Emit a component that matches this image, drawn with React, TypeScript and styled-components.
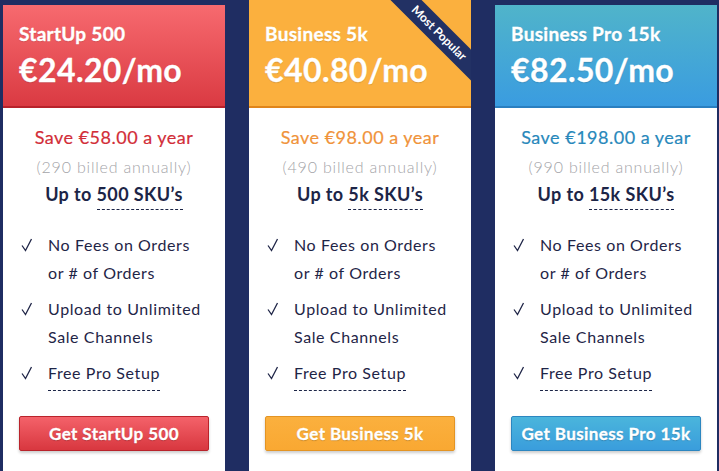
import * as React from 'react'
import styled, { createGlobalStyle } from 'styled-components'

const GlobalStyle = createGlobalStyle`
  html, body {
    margin: 0;
    padding: 0;
    background: #1f2d62;
    overflow: hidden;
  }
  body {
    font-family: Lato, "Open Sans", sans-serif;
  }
`

type Tone = 'red' | 'orange' | 'blue'

const tones = {
  red: {
    top: '#f76a6f',
    bottom: '#da3a42',
    edge: '#b8222b',
    save: '#d22d38',
    btnTop: '#f4626a',
    btnBottom: '#d8373f',
    btnEdge: '#b9232b',
  },
  orange: {
    top: '#fbb03e',
    bottom: '#fbb03e',
    edge: '#e0851a',
    save: '#f0933a',
    btnTop: '#fbb03e',
    btnBottom: '#f9a832',
    btnEdge: '#e39424',
  },
  blue: {
    top: '#50b4ca',
    bottom: '#3a9ce0',
    edge: '#2a7fc0',
    save: '#2888bb',
    btnTop: '#4ab5dc',
    btnBottom: '#3a9ddc',
    btnEdge: '#2c86c0',
  },
}

const Row = styled.div`
  display: flex;
  gap: 24px;
  padding: 0 2px 0 3px;
  align-items: flex-start;
  height: 471px;
  overflow: hidden;
`

const Card = styled.div<{ $featured?: boolean }>`
  width: 222px;
  flex: none;
  margin-top: ${(p) => (p.$featured ? '0' : '5px')};
  background: #fff;
  height: 520px;
`

const Header = styled.div<{ $tone: Tone; $featured?: boolean }>`
  position: relative;
  overflow: hidden;
  box-sizing: border-box;
  height: ${(p) => (p.$featured ? '108px' : '103px')};
  padding: ${(p) => (p.$featured ? '22px' : '17px')} 16px 0 16px;
  background: linear-gradient(
    ${(p) => tones[p.$tone].top},
    ${(p) => tones[p.$tone].bottom}
  );
  border-bottom: 2px solid ${(p) => tones[p.$tone].edge};
  color: #fff;
`

const PlanName = styled.div`
  font-size: 19px;
  font-weight: 700;
  line-height: 24px;
  letter-spacing: 0.3px;
  -webkit-text-stroke: 0.35px #fff;
  text-shadow: 0 1px 1px rgba(0, 0, 0, 0.12);
`

const Price = styled.div`
  font-size: 32px;
  font-weight: 700;
  line-height: 40px;
  margin-top: 4px;
  letter-spacing: 0.4px;
  -webkit-text-stroke: 0.3px #fff;
  text-shadow: 0 1px 1px rgba(0, 0, 0, 0.15);
`

const Ribbon = styled.div`
  position: absolute;
  top: 22px;
  right: -33px;
  width: 130px;
  height: 22px;
  background: #223164;
  color: #fff;
  font-size: 12px;
  font-weight: 700;
  line-height: 22px;
  text-align: center;
  transform: rotate(45deg);
`

const Body = styled.div`
  padding: 17px 16px 0;
`

const Save = styled.div<{ $tone: Tone }>`
  text-align: center;
  font-size: 18px;
  font-weight: 400;
  line-height: 24px;
  color: ${(p) => tones[p.$tone].save};
  letter-spacing: 0.5px;
  -webkit-text-stroke: 0.2px ${(p) => tones[p.$tone].save};
`

const Billed = styled.div`
  text-align: center;
  font-size: 16px;
  font-weight: 300;
  line-height: 22px;
  color: #a4a4a8;
  margin-top: 7px;
  letter-spacing: 0.8px;
`

const Skus = styled.div`
  text-align: center;
  font-size: 18px;
  font-weight: 700;
  line-height: 26px;
  color: #1c2547;
  margin-top: 3px;
  letter-spacing: 0.4px;
`

const Dashed = styled.span<{ $drop?: number }>`
  border-bottom: 1px dashed #1c2547;
  padding-bottom: ${(p) => p.$drop ?? 4}px;
`

const Features = styled.ul`
  list-style: none;
  margin: 24px 0 0;
  padding: 0;
`

const Feature = styled.li`
  display: flex;
  font-size: 16px;
  font-weight: 400;
  line-height: 28px;
  color: #1f2547;
  letter-spacing: 0.6px;
  margin-bottom: 8px;
`

const Check = styled.svg`
  width: 29px;
  flex: none;
  height: 28px;
`

const Button = styled.div<{ $tone: Tone }>`
  margin-top: 29px;
  height: 35px;
  box-sizing: border-box;
  border: 1px solid ${(p) => tones[p.$tone].btnEdge};
  border-radius: 2px;
  background: linear-gradient(
    ${(p) => tones[p.$tone].btnTop},
    ${(p) => tones[p.$tone].btnBottom}
  );
  box-shadow: 0 2px 3px rgba(0, 0, 0, 0.2);
  color: #fff;
  font-size: 17px;
  font-weight: 700;
  line-height: 33px;
  text-align: center;
  -webkit-text-stroke: 0.3px #fff;
  text-shadow: 0 1px 1px rgba(0, 0, 0, 0.2);
  letter-spacing: 0.4px;
`

type Plan = {
  tone: Tone
  name: string
  price: string
  save: string
  billed: string
  skus: string
  featured?: boolean
}

const plans: Plan[] = [
  { tone: 'red', name: 'StartUp 500', price: '€24.20/mo', save: 'Save €58.00 a year', billed: '(290 billed annually)', skus: '500 SKU’s' },
  { tone: 'orange', name: 'Business 5k', price: '€40.80/mo', save: 'Save €98.00 a year', billed: '(490 billed annually)', skus: '5k SKU’s', featured: true },
  { tone: 'blue', name: 'Business Pro 15k', price: '€82.50/mo', save: 'Save €198.00 a year', billed: '(990 billed annually)', skus: '15k SKU’s' },
]

const Tick = () => (
  <Check viewBox="0 0 29 28">
    <path d="M3 14.5 L6.5 19.5 L12.5 8" fill="none" stroke="#1f2547" strokeWidth="1.3" />
  </Check>
)

const PlanCard = ({ plan }: { plan: Plan }) => (
  <Card $featured={plan.featured}>
    <Header $tone={plan.tone} $featured={plan.featured}>
      <PlanName>{plan.name}</PlanName>
      <Price>{plan.price}</Price>
      {plan.featured && <Ribbon>Most Popular</Ribbon>}
    </Header>
    <Body>
      <Save $tone={plan.tone}>{plan.save}</Save>
      <Billed>{plan.billed}</Billed>
      <Skus>
        Up to <Dashed>{plan.skus}</Dashed>
      </Skus>
      <Features>
        <Feature>
          <Tick />
          <span>No Fees on Orders or # of Orders</span>
        </Feature>
        <Feature>
          <Tick />
          <span>Upload to Unlimited Sale Channels</span>
        </Feature>
        <Feature>
          <Tick />
          <span>
            <Dashed $drop={8}>Free Pro Setup</Dashed>
          </span>
        </Feature>
      </Features>
      <Button $tone={plan.tone}>Get {plan.name}</Button>
    </Body>
  </Card>
)

export default function App() {
  return (
    <>
      <GlobalStyle />
      <Row>
        {plans.map((p) => (
          <PlanCard key={p.name} plan={p} />
        ))}
      </Row>
    </>
  )
}
